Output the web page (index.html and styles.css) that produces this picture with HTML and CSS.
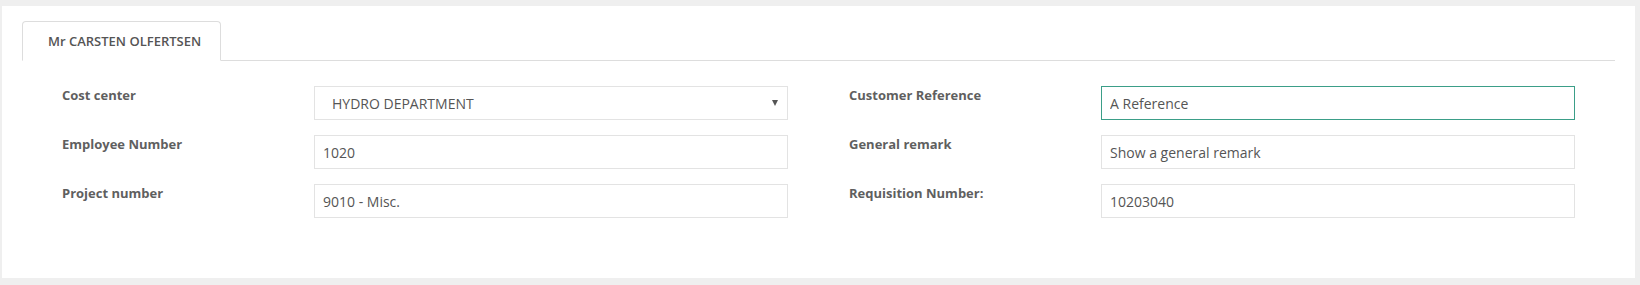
FILE: index.html
```html
<!DOCTYPE html>
<html>
<head>
    <meta charset="utf-8" />
    <title>Order details</title>
    <link rel="stylesheet" href="styles.css">
</head>
<body>
    <div class="panel">
        <ul class="tabs">
            <li class="tab active">Mr CARSTEN OLFERTSEN</li>
        </ul>
        <div class="form">
            <label class="label">Cost center</label>
            <div class="select">
                <span>HYDRO DEPARTMENT</span>
                <i class="caret"></i>
            </div>
            <label class="label right">Customer Reference</label>
            <input type="text" class="input focus" value="A Reference" />

            <label class="label">Employee Number</label>
            <input type="text" class="input" value="1020" />
            <label class="label right">General remark</label>
            <input type="text" class="input" value="Show a general remark" />

            <label class="label">Project number</label>
            <input type="text" class="input" value="9010 - Misc." />
            <label class="label right">Requisition Number:</label>
            <input type="text" class="input" value="10203040" />
        </div>
    </div>
</body>
</html>
```

FILE: styles.css
```css
* {
    padding: 0;
    margin: 0;
    box-sizing: border-box;
}

body {
    background: #efefef;
    font-family: "Open Sans", "Liberation Sans", sans-serif;
    padding: 6px 5px 7px 2px;
}

.panel {
    background: #fff;
    height: 272px;
    padding: 15px 20px 0;
}

.tabs {
    list-style: none;
    display: flex;
    border-bottom: 1px solid #dddddd;
}

    .tabs .tab {
        width: 199px;
        height: 40px;
        margin-bottom: -1px;
        padding-left: 25px;
        line-height: 39px;
        font-size: 13px;
        font-weight: 600;
        color: #555;
        background: #fff;
        border: 1px solid #dddddd;
        border-bottom-color: #fff;
        border-radius: 4px 4px 0 0;
    }

.form {
    display: grid;
    grid-template-columns: 252px 474px 313px 474px;
    row-gap: 15px;
    padding: 25px 40px 0;
}

.label {
    font-size: 13px;
    font-weight: 700;
    color: #5f5f5f;
    line-height: 18px;
}

    .label.right {
        padding-left: 61px;
    }

.input,
.select {
    height: 34px;
    border: 1px solid #e3e3e3;
    font-family: "Open Sans", "Liberation Sans", sans-serif;
    font-size: 14px;
    color: #555;
    background: #fff;
    outline: none;
}

.input {
    padding: 0 8px;
}

    .input.focus {
        border-color: #3b9e88;
    }

.select {
    display: flex;
    align-items: center;
    justify-content: space-between;
    padding: 0 9px 0 17px;
}

.caret {
    width: 0;
    height: 0;
    border-left: 3px solid transparent;
    border-right: 3px solid transparent;
    border-top: 6px solid #555;
}
```
